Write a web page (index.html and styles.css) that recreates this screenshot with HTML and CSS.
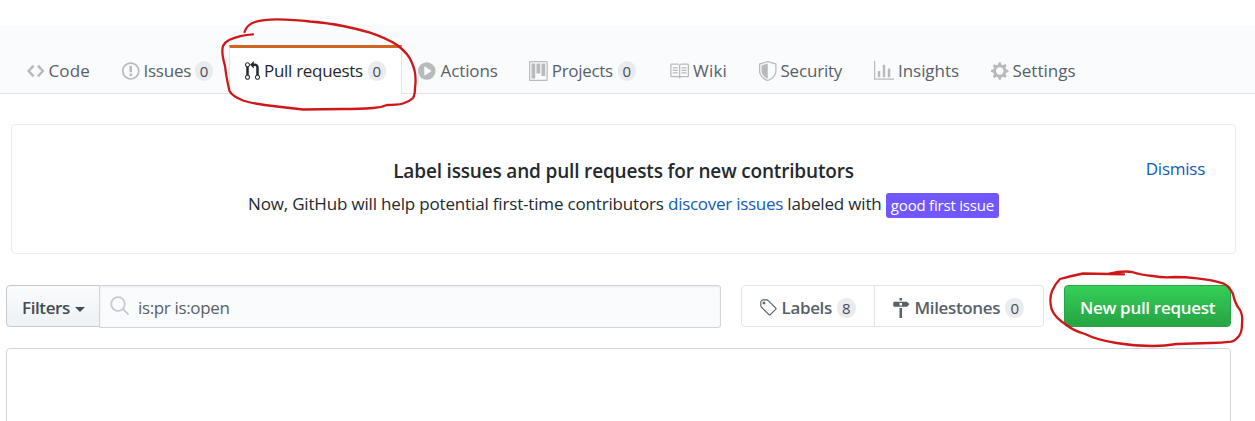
FILE: index.html
```html
<!DOCTYPE html>
<html lang="en">
<head>
<meta charset="utf-8">
<title>Pull requests</title>
<link rel="stylesheet" href="styles.css">
</head>
<body>
<nav class="repo-nav">
  <a class="tab tab-code"><svg class="icon w14" viewBox="0 0 14 16"><path d="M9.5 3L8 4.5 11.5 8 8 11.5 9.5 13 14 8 9.5 3zm-5 0L0 8l4.5 5L6 11.5 2.5 8 6 4.5 4.5 3z"/></svg><span>Code</span></a>
  <a class="tab tab-issues"><svg class="icon w14" viewBox="0 0 14 16"><path d="M7 2.3c3.14 0 5.7 2.56 5.7 5.7s-2.56 5.7-5.7 5.7A5.71 5.71 0 0 1 1.3 8c0-3.14 2.56-5.7 5.7-5.7zM7 1C3.14 1 0 4.14 0 8s3.14 7 7 7 7-3.14 7-7-3.14-7-7-7zm1 3H6v5h2V4zm0 6H6v2h2v-2z"/></svg><span>Issues</span><span class="counter">0</span></a>
  <a class="tab tab-pulls selected"><svg class="icon w12" viewBox="0 0 12 16"><path d="M11 11.28V5c-.03-.78-.34-1.47-.94-2.06C9.46 2.35 8.78 2.03 8 2H7V0L4 3l3 3V4h1c.27.02.48.11.69.31.21.2.3.42.31.69v6.28A1.993 1.993 0 0 0 10 15a1.993 1.993 0 0 0 1-3.72zm-1 2.92c-.66 0-1.2-.55-1.2-1.2 0-.65.55-1.2 1.2-1.2.65 0 1.2.55 1.2 1.2 0 .65-.55 1.2-1.2 1.2zM4 3c0-1.11-.89-2-2-2a1.993 1.993 0 0 0-1 3.72v6.56A1.993 1.993 0 0 0 2 15a1.993 1.993 0 0 0 1-3.72V4.72c.59-.34 1-.98 1-1.72zm-.8 10c0 .66-.55 1.2-1.2 1.2-.65 0-1.2-.55-1.2-1.2 0-.65.55-1.2 1.2-1.2.65 0 1.2.55 1.2 1.2zM2 4.2C1.34 4.2.8 3.65.8 3c0-.65.55-1.2 1.2-1.2.65 0 1.2.55 1.2 1.2 0 .65-.55 1.2-1.2 1.2z"/></svg><span>Pull requests</span><span class="counter">0</span></a>
  <a class="tab tab-actions"><svg class="icon w14" viewBox="0 0 14 16"><path d="M14 8A7 7 0 110 8a7 7 0 0114 0zm-8.223 3.482l4.599-3.066a.5.5 0 000-.832L5.777 4.518A.5.5 0 005 4.934v6.132a.5.5 0 00.777.416z"/></svg><span>Actions</span></a>
  <a class="tab tab-projects"><svg class="icon w15" viewBox="0 0 15 16"><path fill-rule="evenodd" d="M10 12h3V2h-3v10zm-4-2h3V2H6v8zm-4 4h3V2H2v12zm-1 1h13V1H1v14zM14 0H1a1 1 0 0 0-1 1v14a1 1 0 0 0 1 1h13a1 1 0 0 0 1-1V1a1 1 0 0 0-1-1z"/></svg><span>Projects</span><span class="counter">0</span></a>
  <a class="tab tab-wiki"><svg class="icon w16" viewBox="0 0 16 16"><path d="M3 5h4v1H3V5zm0 3h4V7H3v1zm0 2h4V9H3v1zm11-5h-4v1h4V5zm0 2h-4v1h4V7zm0 2h-4v1h4V9zm2-6v9c0 .55-.45 1-1 1H9.5l-1 1-1-1H2c-.55 0-1-.45-1-1V3c0-.55.45-1 1-1h5.5l1 1 1-1H15c.55 0 1 .45 1 1zm-8 .5L7.5 3H2v9h6V3.5zm7-.5H9.5l-.5.5V12h6V3z"/></svg><span>Wiki</span></a>
  <a class="tab tab-security"><svg class="icon w14" viewBox="0 0 14 16"><path fill-rule="evenodd" d="M0 2l7-2 7 2v6.02C14 12.69 8.69 16 7 16c-1.69 0-7-3.31-7-7.98V2zm1 .75L7 1l6 1.75v5.268C13 12.104 8.449 15 7 15c-1.449 0-6-2.896-6-6.982V2.75zm1 .75L7 2v12c-1.207 0-5-2.482-5-5.985V3.5z"/></svg><span>Security</span></a>
  <a class="tab tab-insights"><svg class="icon w16" viewBox="0 0 16 16"><path d="M16 14v1H0V0h1v14h15zM5 13H3V8h2v5zm4 0H7V3h2v10zm4 0h-2V6h2v7z"/></svg><span>Insights</span></a>
  <a class="tab tab-settings"><svg class="icon w14" viewBox="0 0 14 16"><path fill-rule="evenodd" d="M14 8.77v-1.6l-1.94-.64-.45-1.09.88-1.84-1.13-1.13-1.81.91-1.09-.45-.69-1.92h-1.6l-.63 1.94-1.11.45-1.84-.88-1.13 1.13.91 1.81-.45 1.09L0 7.23v1.59l1.94.64.45 1.09-.88 1.84 1.13 1.13 1.81-.91 1.09.45.69 1.92h1.59l.63-1.94 1.11-.45 1.84.88 1.13-1.13-.92-1.81.47-1.09L14 8.75v.02zM7 11c-1.66 0-3-1.34-3-3s1.34-3 3-3 3 1.34 3 3-1.34 3-3 3z"/></svg><span>Settings</span></a>
</nav>

<section class="banner">
  <a class="dismiss">Dismiss</a>
  <h3 class="banner-title">Label issues and pull requests for new contributors</h3>
  <p class="banner-text">Now, GitHub will help potential first-time contributors <a class="link">discover issues</a> labeled with <span class="issue-label">good first issue</span></p>
</section>

<div class="toolbar">
  <button class="filters">Filters<i class="caret"></i></button>
  <div class="search"><svg class="search-icon" viewBox="0 0 20 20"><circle cx="8" cy="8" r="6.8"/><path d="M13 13l5.6 5.6"/></svg><span>is:pr is:open</span></div>
  <div class="subnav">
    <a class="subnav-item labels"><svg class="icon w14" viewBox="0 0 14 16"><path fill-rule="evenodd" d="M7.73 1.73C7.26 1.26 6.62 1 5.96 1H3.5C2.13 1 1 2.13 1 3.5v2.47c0 .66.27 1.3.73 1.77l6.06 6.06c.39.39 1.02.39 1.41 0l4.59-4.59a.996.996 0 0 0 0-1.41L7.73 1.73zM2.38 7.09c-.31-.3-.47-.7-.47-1.13V3.5c0-.88.72-1.59 1.59-1.59h2.47c.42 0 .83.16 1.13.47l6.14 6.13-4.73 4.73-6.13-6.15zM3.01 3h2v2H3V3h.01z"/></svg><span>Labels</span><span class="counter">8</span></a>
    <a class="subnav-item milestones"><svg class="icon w14" viewBox="0 0 14 16"><path fill-rule="evenodd" d="M8 2H6V0h2v2zm4 5H2c-.55 0-1-.45-1-1V4c0-.55.45-1 1-1h10l2 2-2 2zM8 4H6v2h2V4zM6 16h2V8H6v8z"/></svg><span>Milestones</span><span class="counter">0</span></a>
  </div>
  <button class="new-pull">New pull request</button>
</div>

<div class="list"></div>

<svg class="marks" viewBox="0 0 1255 421">
  <path d="M244.500 32C246 27 249 24 255 22Q263 19.300 277 19.300Q295 19.500 310 21.500Q328 23 343 26Q358 29 370 32.700Q386 38 397 45Q409 54 412 63Q417 74 415 88Q415 95 413 98Q409 102 403 103.500Q397 105 387 105Q380 108 373 108Q360 109 343 109L303 109.500Q290 108 277 106.500Q256 104.500 243 100.500Q232 96 229.500 91Q226 76 225 66Q221 52 223 46Q225 42 229 40Q240 35 253 34.300"/>
  <path d="M1124 274.300L1108 274L1118 272Q1127 271 1132 272Q1141 275 1153 276Q1163 278 1175 277Q1186 277 1197 278.300Q1213 280 1223 283.300Q1229 286 1233 294Q1235 304 1240 310Q1243 315 1242 324Q1242 332 1239 336Q1235 341 1231 341.700Q1222 343 1210 343L1176.500 344Q1165 346 1153 346Q1134 346 1116.500 343Q1097 340 1085 334Q1074 331 1066.500 325Q1055 318 1051.500 309Q1049 299 1052 291Q1055 284 1060 279Q1071 276 1083 273.500L1110 274"/>
</svg>
</body>
</html>
```
FILE: styles.css
```css
* { box-sizing: border-box; }

body {
  margin: 0;
  height: 421px;
  overflow: hidden;
  position: relative;
  padding-top: 25px;
  background: #fff;
  color: #24292e;
  font: 17px/26px "Open Sans", "Noto Sans", sans-serif;
}

.icon { height: 20px; flex: none; fill: currentColor; }
.w12 { width: 15px; }
.w14 { width: 17.5px; }
.w15 { width: 18.75px; }
.w16 { width: 20px; }

.counter {
  width: 18px;
  height: 20px;
  margin-left: 1px;
  border-radius: 10px;
  background: #e9ebee;
  color: #444d56;
  font-size: 15px;
  line-height: 20px;
  letter-spacing: 0;
  text-align: center;
}

/* Repository tabs */
.repo-nav {
  height: 69px;
  padding: 20px 0 0 27px;
  display: flex;
  background: #fafbfc;
  border-bottom: 1px solid #e1e4e8;
}
.tab {
  height: 49px;
  padding-top: 3px;
  display: flex;
  flex: none;
  align-items: center;
  gap: 4px;
  color: #586069;
  white-space: nowrap;
}
.tab > .icon { color: #b8bbbe; }
.tab-code { width: 95px; letter-spacing: .1px; }
.tab-issues { width: 107px; letter-spacing: -.25px; }
.tab-issues .counter { margin-left: 0; }
.tab-pulls { width: 173px; padding-left: 16px; letter-spacing: -.3px; }
.tab-actions { width: 127px; padding-left: 16px; gap: 5px; letter-spacing: -.1px; }
.tab-projects { width: 140px; letter-spacing: -.3px; }
.tab-wiki { width: 90px; letter-spacing: .2px; }
.tab-security { width: 115px; letter-spacing: -.2px; }
.tab-insights { width: 117px; letter-spacing: -.05px; }
.selected {
  padding-top: 0;
  background: #fff;
  color: #24292e;
  border: solid #e1e4e8;
  border-width: 3px 1px 0;
  border-top-color: #d1651f;
  padding-left: 15px;
}
.selected > .icon { color: #24292e; }

/* Banner */
.banner {
  position: relative;
  width: 1225px;
  height: 130px;
  margin: 30px 0 0 11px;
  padding-top: 31px;
  border: 1px solid #eaecef;
  border-radius: 4px;
  text-align: center;
}
.banner-title {
  margin: 0;
  font-size: 19px;
  font-weight: 600;
  line-height: 30px;
  letter-spacing: -.17px;
}
.banner-text { margin: 4px 0 0; line-height: 28px; letter-spacing: -.17px; white-space: nowrap; }
.link, .dismiss { color: #0f5bc0; }
.link { letter-spacing: -.27px; }
.dismiss { position: absolute; top: 31px; right: 30px; letter-spacing: -.25px; }
.issue-label {
  display: inline-block;
  height: 25px;
  padding: 0 5px;
  border-radius: 3px;
  background: #7057ff;
  color: #fff;
  font-size: 15px;
  line-height: 24px;
  letter-spacing: -.2px;
  vertical-align: -1px;
}

/* Filter toolbar */
.toolbar {
  display: flex;
  align-items: flex-start;
  margin: 31px 0 0 6px;
}
button { margin: 0; font: inherit; font-weight: 600; white-space: nowrap; }
.filters {
  width: 94px;
  height: 42px;
  padding: 3px 0 0 15px;
  display: flex;
  align-items: center;
  border: 1px solid #c5c9ce;
  border-radius: 4px 0 0 4px;
  background: linear-gradient(#fafbfc, #eff3f6 90%);
  color: #444b52;
  letter-spacing: -.4px;
}
.caret {
  margin: 3px 0 0 5px;
  border: solid transparent;
  border-width: 5px 5px 0;
  border-top-color: #444b52;
}
.search {
  width: 622px;
  height: 43px;
  margin-left: -1px;
  padding: 2px 0 0 10px;
  display: flex;
  align-items: center;
  gap: 8px;
  border: 1px solid #d1d5da;
  border-radius: 0 3px 3px 0;
  background: #fafbfc;
  box-shadow: inset 0 1px 2px rgba(27, 31, 35, .08);
  color: #586069;
  letter-spacing: -.35px;
}
.search-icon {
  width: 20px;
  height: 20px;
  margin-top: -3px;
  fill: none;
  stroke: #c6cbd1;
  stroke-width: 1.8;
}
.subnav { display: flex; margin-left: 20px; }
.subnav-item {
  height: 42px;
  padding-left: 17px;
  display: flex;
  align-items: center;
  gap: 5px;
  padding-top: 3px;
  border: 1px solid #e1e4e8;
  color: #586069;
  font-weight: 600;
  letter-spacing: -.35px;
}
.subnav-item .counter { font-weight: 400; width: 19px; margin-left: 0; }
.labels { width: 134px; border-radius: 4px 0 0 4px; }
.milestones { width: 170px; margin-left: -1px; border-radius: 0 4px 4px 0; }
.new-pull {
  width: 167px;
  height: 42px;
  margin-left: 20px;
  padding: 3px 0 0;
  border: 1px solid #2ba246;
  border-radius: 4px;
  background: linear-gradient(#34d058, #28a745 90%);
  color: #fff;
  letter-spacing: -.3px;
}

.list {
  width: 1225px;
  height: 90px;
  margin: 20px 0 0 6px;
  border: 1px solid #d1d5da;
  border-radius: 4px;
}

/* Hand-drawn highlights */
.marks {
  position: absolute;
  inset: 0;
  width: 1255px;
  height: 421px;
  fill: none;
  stroke: #cf1719;
  stroke-width: 2.3;
  stroke-linejoin: round;
  stroke-linecap: round;
  pointer-events: none;
}
```
